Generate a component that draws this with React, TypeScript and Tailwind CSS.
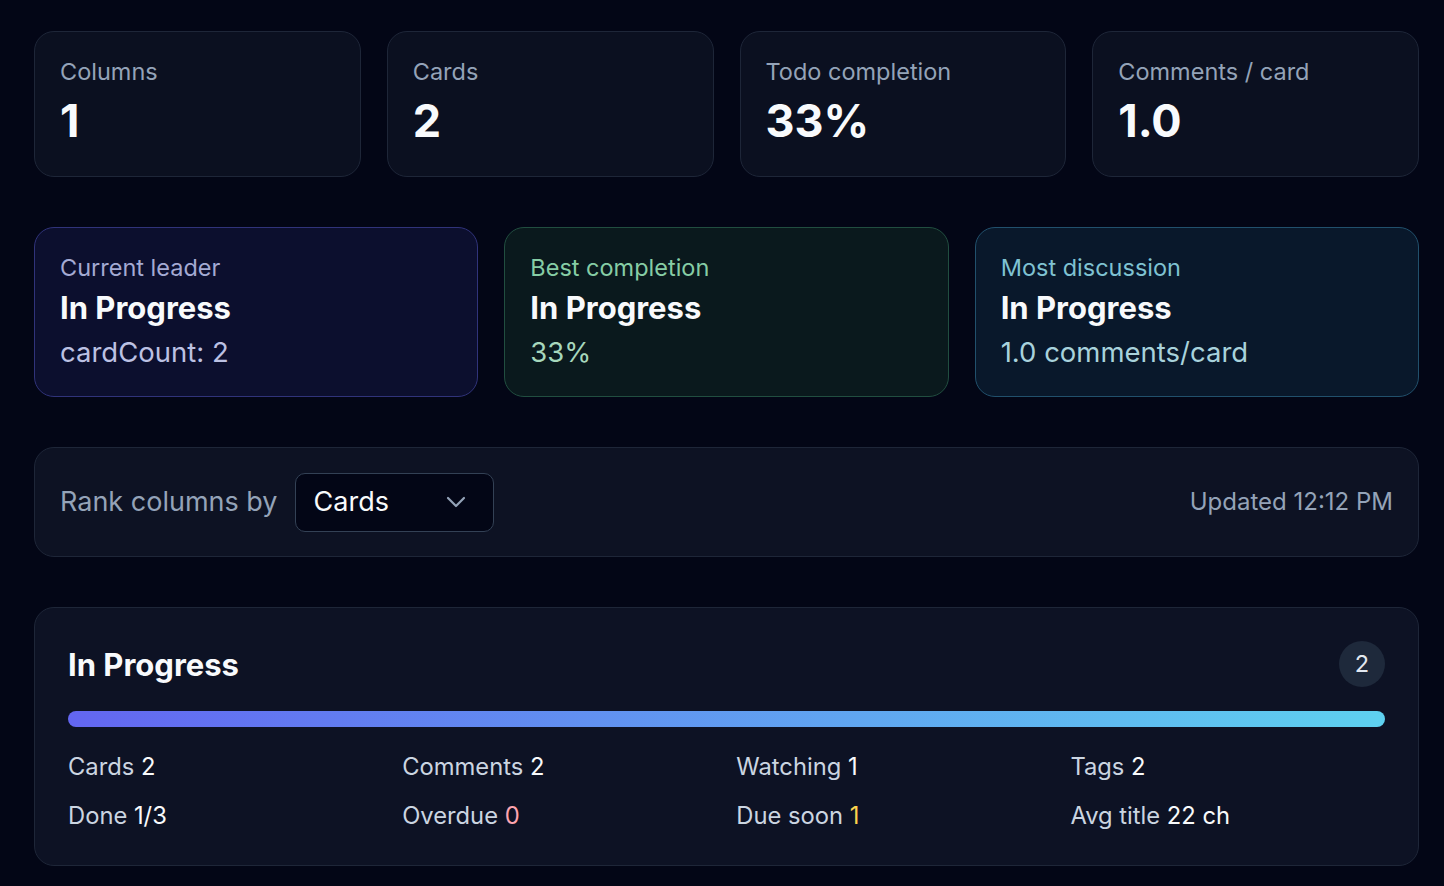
const stats = [
  { label: "Columns", value: "1" },
  { label: "Cards", value: "2" },
  { label: "Todo completion", value: "33%" },
  { label: "Comments / card", value: "1.0" },
];

const highlights = [
  {
    label: "Current leader",
    title: "In Progress",
    sub: "cardCount: 2",
    box: "border-[#30337a] bg-[#0c0f2e]",
    labelColor: "text-[#a4aad3]",
    subColor: "text-[#bcc1e3]",
  },
  {
    label: "Best completion",
    title: "In Progress",
    sub: "33%",
    box: "border-[#214e40] bg-[#0a191d]",
    labelColor: "text-[#86cda5]",
    subColor: "text-[#a6d7bc]",
  },
  {
    label: "Most discussion",
    title: "In Progress",
    sub: "1.0 comments/card",
    box: "border-[#21506c] bg-[#09182b]",
    labelColor: "text-[#7fc2d2]",
    subColor: "text-[#a8d2dc]",
  },
];

// column metrics, value color optional
const metrics = [
  { label: "Cards", value: "2" },
  { label: "Comments", value: "2" },
  { label: "Watching", value: "1" },
  { label: "Tags", value: "2" },
  { label: "Done", value: "1/3" },
  { label: "Overdue", value: "0", color: "text-[#fda4af]" },
  { label: "Due soon", value: "1", color: "text-[#fcd34d]" },
  { label: "Avg title", value: "22 ch" },
];

function App() {
  return (
    <div className="min-h-screen bg-[#030616] pl-[34px] pr-[25px] pt-[31px] pb-[40px] font-['Inter','Noto_Sans',sans-serif]">
      <div className="flex flex-col gap-[50px]">
        {/* top stat cards */}
        <div className="grid grid-cols-4 gap-[26px]">
          {stats.map(s => (
            <div
              key={s.label}
              className="h-[146px] rounded-[20px] border border-[#1e2638] bg-[#0b1020] px-[25px] pt-[24px]"
            >
              <div className="text-[23.5px] leading-[32.5px] text-[#94a3b8]">{s.label}</div>
              <div className="text-[45px] leading-[64px] font-bold text-[#f8fafc]">{s.value}</div>
            </div>
          ))}
        </div>

        {/* leaders */}
        <div className="grid grid-cols-3 gap-[26px]">
          {highlights.map(h => (
            <div key={h.label} className={`h-[170px] rounded-[20px] border px-[25px] pt-[24px] ${h.box}`}>
              <div className={`text-[23.5px] leading-[32.5px] ${h.labelColor}`}>{h.label}</div>
              <div className="text-[31px] leading-[45px] font-bold text-[#f8fafc]">{h.title}</div>
              <div className={`text-[27.5px] leading-[45px] ${h.subColor}`}>{h.sub}</div>
            </div>
          ))}
        </div>

        {/* rank control */}
        <div className="flex h-[110px] items-center justify-between rounded-[20px] border border-[#1e2638] bg-[#0d1223] px-[25px]">
          <div className="flex items-center gap-[17px]">
            <span className="text-[27px] text-[#94a3b8]">Rank columns by</span>
            <div className="flex h-[59px] w-[199px] items-center justify-between rounded-[10px] border border-[#334155] bg-[#030616] pl-[18px] pr-[27px]">
              <span className="text-[27px] text-[#f8fafc]">Cards</span>
              <svg width="20" height="12" viewBox="0 0 20 12" fill="none">
                <path d="M2 2 L10 10 L18 2" stroke="#94a3b8" strokeWidth="2.2" strokeLinecap="round" strokeLinejoin="round" />
              </svg>
            </div>
          </div>
          <span className="text-[24px] text-[#94a3b8]">Updated 12:12 PM</span>
        </div>

        {/* column card */}
        <div className="rounded-[20px] border border-[#1e2638] bg-[#0d1224] px-[33px] pt-[33px] pb-[33px]">
          <div className="flex items-center justify-between">
            <h2 className="text-[31px] leading-[45px] font-bold text-[#f8fafc]">In Progress</h2>
            <div className="flex h-[46px] w-[46px] items-center justify-center rounded-full bg-[#1e293b] text-[23.5px] text-[#e2e8f0]">
              2
            </div>
          </div>
          <div className="mt-[24px] h-[16px] rounded-full bg-[linear-gradient(90deg,#6366f1,#5ed1f0)]" />
          <div className="mt-[24px] grid grid-cols-4 gap-x-[19.5px] gap-y-[16px]">
            {metrics.map(m => (
              <div key={m.label} className="text-[23.75px] leading-[32.5px] text-[#cbd5e1]">
                {m.label} <span className={m.color ?? "text-[#f8fafc]"}>{m.value}</span>
              </div>
            ))}
          </div>
        </div>
      </div>
    </div>
  );
}

export default App;
